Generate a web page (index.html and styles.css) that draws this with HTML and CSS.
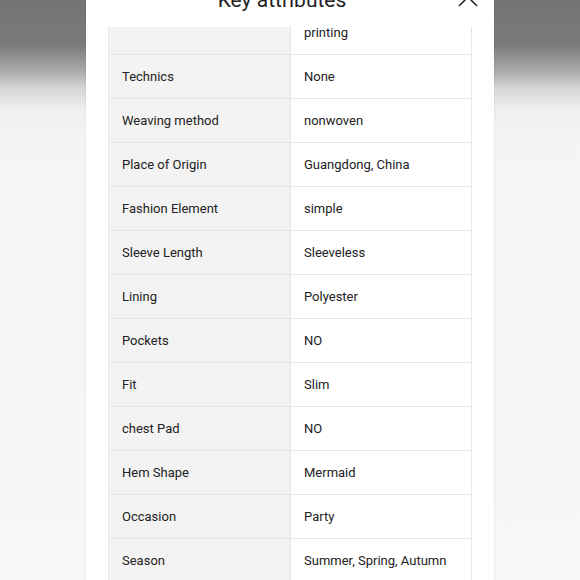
FILE: index.html
```html
<!DOCTYPE html>
<html>
<head>
<meta charset="utf-8">
<link rel="stylesheet" href="styles.css">
</head>
<body>
<div class="modal">
  <div class="header">
    <div class="title">Key attributes</div>
    <div class="close">
      <svg width="20" height="20" viewBox="0 0 20 20"><path d="M1 1L19 19M19 1L1 19" stroke="#2a2a2a" stroke-width="1.6" fill="none"/></svg>
    </div>
  </div>
  <div class="scroll">
    <div class="attrs">
      <div class="row"><div class="k"></div><div class="v">printing</div></div>
      <div class="row"><div class="k">Technics</div><div class="v">None</div></div>
      <div class="row"><div class="k">Weaving method</div><div class="v">nonwoven</div></div>
      <div class="row"><div class="k">Place of Origin</div><div class="v">Guangdong, China</div></div>
      <div class="row"><div class="k">Fashion Element</div><div class="v">simple</div></div>
      <div class="row"><div class="k">Sleeve Length</div><div class="v">Sleeveless</div></div>
      <div class="row"><div class="k">Lining</div><div class="v">Polyester</div></div>
      <div class="row"><div class="k">Pockets</div><div class="v">NO</div></div>
      <div class="row"><div class="k">Fit</div><div class="v">Slim</div></div>
      <div class="row"><div class="k">chest Pad</div><div class="v">NO</div></div>
      <div class="row"><div class="k">Hem Shape</div><div class="v">Mermaid</div></div>
      <div class="row"><div class="k">Occasion</div><div class="v">Party</div></div>
      <div class="row"><div class="k">Season</div><div class="v">Summer, Spring, Autumn</div></div>
    </div>
  </div>
</div>
</body>
</html>
```
FILE: styles.css
```css
html, body {
  margin: 0;
  height: 100%;
  overflow: hidden;
}
body {
  font-family: Roboto, "Liberation Sans", sans-serif;
  color: #222;
  background: linear-gradient(to bottom, #747474 0, #7b7b7b 45px, #a8a8a8 70px, #d6d6d6 88px, #eeeeee 108px, #f4f4f4 140px, #f7f7f7 100%);
}
.modal {
  margin: -20px 0 0 86px;
  width: 408px;
  height: 640px;
  background: #fff;
  box-shadow: 0 0 1px rgba(0,0,0,0.25);
  display: flex;
  flex-direction: column;
}
.header {
  height: 47px;
  flex: none;
  display: flex;
  align-items: flex-start;
  padding: 8px 16px 0 20px;
  box-sizing: border-box;
}
.title {
  flex: 1;
  text-align: center;
  font-size: 21px;
  line-height: 24px;
  color: #222;
  font-weight: 400;
}
.close {
  width: 20px;
  height: 20px;
  margin-top: -1px;
}
.close svg { display: block; }
.scroll {
  flex: 1;
  overflow: hidden;
  padding: 0 22px;
}
.attrs {
  margin-top: -16px;
  width: 364px;
  border-left: 1px solid #e6e6e6;
  border-right: 1px solid #e6e6e6;
  box-sizing: border-box;
}
.row {
  display: grid;
  grid-template-columns: 182px 180px;
  height: 44px;
  box-sizing: border-box;
  border-bottom: 1px solid #e6e6e6;
  font-size: 13px;
}
.k, .v {
  display: flex;
  align-items: center;
  padding-left: 13px;
  box-sizing: border-box;
}
.k {
  background: #f3f3f3;
  border-right: 1px solid #e6e6e6;
}
.v {
  background: #fff;
}
```
